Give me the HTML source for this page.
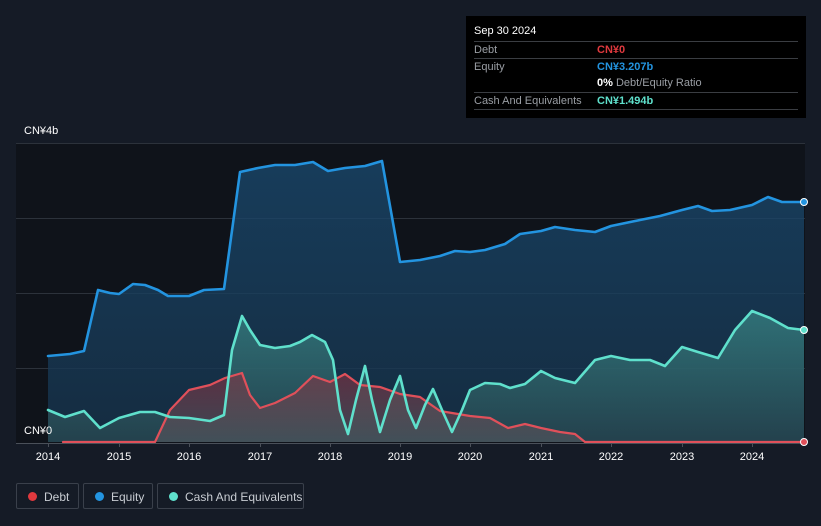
<!DOCTYPE html>
<html><head><meta charset="utf-8"><style>
body{margin:0;width:821px;height:526px;background:#151b26;font-family:"Liberation Sans",sans-serif;overflow:hidden;position:relative}
.tt{position:absolute;left:466px;top:16px;width:340px;height:102px;background:#000;color:#fff;font-size:11px}
.tt .r{position:absolute;left:8px;width:324px;border-top:1px solid #3a3d42;height:17px;line-height:17px}
.tt .l{color:#9a9ea4;position:absolute;left:0}
.tt .v{position:absolute;left:123px;font-weight:bold}
.leg{position:absolute;top:483px;height:26px;border:1px solid #3a404b;border-radius:2px;color:#c8ccd2;font-size:12px;line-height:26px;box-sizing:border-box}
.leg i{position:absolute;left:11px;top:8px;width:9px;height:9px;border-radius:50%}
.leg span{position:absolute;left:27px}
.ax{position:absolute;color:#fff;font-size:11px}
</style></head><body>
<svg width="821" height="526" style="position:absolute;left:0;top:0">
<defs>
<linearGradient id="ge" x1="0" y1="0" x2="0" y2="1"><stop offset="0" stop-color="#1a4a70" stop-opacity=".75"/><stop offset="1" stop-color="#16324a" stop-opacity=".8"/></linearGradient>
<linearGradient id="gc" x1="0" y1="0" x2="0" y2="1"><stop offset="0" stop-color="#3a8a88" stop-opacity=".7"/><stop offset="1" stop-color="#2a4a52" stop-opacity=".7"/></linearGradient>
<linearGradient id="gd" x1="0" y1="0" x2="0" y2="1"><stop offset="0" stop-color="#8a3040" stop-opacity=".6"/><stop offset="1" stop-color="#555a60" stop-opacity=".6"/></linearGradient>
</defs>
<rect x="16" y="143" width="789" height="300" fill="#0f131a"/>
<g stroke="#2c323b" stroke-width="1"><line x1="16" x2="805" y1="143.5" y2="143.5"/><line x1="16" x2="805" y1="218.5" y2="218.5"/><line x1="16" x2="805" y1="293.5" y2="293.5"/><line x1="16" x2="805" y1="368.5" y2="368.5"/></g>
<polygon fill="url(#ge)" points="48,442 48,356 70,354 84,351 98,290 110,293 119,294 133,284 145,285 158,290 168,296 189,296 204,290 224,289 240,172 258,168 275,165 295,165 313,162 328,171 345,168 365,166 382,161 400,262 420,260 440,256 455,251 470,252 485,250 505,244 520,234 541,231 555,227 575,230 595,232 611,226 640,220 660,216 682,210 698,206 712,211 730,210 752,205 768,197 782,202 804,202 804,442"/>
<polygon fill="url(#gc)" points="48,442 48,410 65,417 84,411 100,428 119,418 140,412 155,412 170,417 189,418 210,421 224,415 232,350 242,316 250,330 260,345 275,348 290,346 300,342 312,335 325,342 333,360 340,410 348,434 356,400 365,366 372,400 380,432 390,400 400,376 408,410 416,428 425,405 433,389 442,410 452,432 462,410 470,390 485,383 500,384 510,388 525,384 541,371 555,378 575,383 595,360 611,356 630,360 650,360 665,366 682,347 698,352 718,358 735,330 752,311 770,318 788,328 804,330 804,442"/>
<polygon fill="url(#gd)" points="155,442 170,410 189,390 210,385 225,378 242,373 250,395 260,408 275,403 295,393 313,376 330,382 345,374 360,385 380,387 400,394 420,397 440,411 470,416 490,418 508,428 525,424 541,428 560,432 575,434 585,442"/>
<g fill="none" stroke-width="2.2" stroke-linejoin="round" stroke-linecap="round">
<polyline stroke="#e0505a" points="63,442 155,442 170,410 189,390 210,385 225,378 242,373 250,395 260,408 275,403 295,393 313,376 330,382 345,374 360,385 380,387 400,394 420,397 440,411 470,416 490,418 508,428 525,424 541,428 560,432 575,434 585,442 804,442"/>
<polyline stroke="#2394e0" stroke-width="2.6" points="48,356 70,354 84,351 98,290 110,293 119,294 133,284 145,285 158,290 168,296 189,296 204,290 224,289 240,172 258,168 275,165 295,165 313,162 328,171 345,168 365,166 382,161 400,262 420,260 440,256 455,251 470,252 485,250 505,244 520,234 541,231 555,227 575,230 595,232 611,226 640,220 660,216 682,210 698,206 712,211 730,210 752,205 768,197 782,202 804,202"/>
<polyline stroke="#5fe0cc" stroke-width="2.6" points="48,410 65,417 84,411 100,428 119,418 140,412 155,412 170,417 189,418 210,421 224,415 232,350 242,316 250,330 260,345 275,348 290,346 300,342 312,335 325,342 333,360 340,410 348,434 356,400 365,366 372,400 380,432 390,400 400,376 408,410 416,428 425,405 433,389 442,410 452,432 462,410 470,390 485,383 500,384 510,388 525,384 541,371 555,378 575,383 595,360 611,356 630,360 650,360 665,366 682,347 698,352 718,358 735,330 752,311 770,318 788,328 804,330"/>
</g>
<line x1="16" x2="805" y1="443.5" y2="443.5" stroke="#4a5059"/>
<g stroke="#4a5059"><line x1="48.5" x2="48.5" y1="443" y2="447"/><line x1="119.5" x2="119.5" y1="443" y2="447"/><line x1="189.5" x2="189.5" y1="443" y2="447"/><line x1="260.5" x2="260.5" y1="443" y2="447"/><line x1="330.5" x2="330.5" y1="443" y2="447"/><line x1="400.5" x2="400.5" y1="443" y2="447"/><line x1="470.5" x2="470.5" y1="443" y2="447"/><line x1="541.5" x2="541.5" y1="443" y2="447"/><line x1="611.5" x2="611.5" y1="443" y2="447"/><line x1="682.5" x2="682.5" y1="443" y2="447"/><line x1="752.5" x2="752.5" y1="443" y2="447"/></g>
<circle cx="804" cy="202" r="3.5" fill="#2394e0" stroke="#fff" stroke-width="1"/>
<circle cx="804" cy="330" r="3.5" fill="#5fe0cc" stroke="#fff" stroke-width="1"/>
<circle cx="804" cy="442" r="3.5" fill="#e0505a" stroke="#fff" stroke-width="1"/>
<g fill="#fff" font-size="11" font-family="Liberation Sans" text-anchor="middle">
<text x="48" y="460">2014</text><text x="119" y="460">2015</text><text x="189" y="460">2016</text><text x="260" y="460">2017</text><text x="330" y="460">2018</text><text x="400" y="460">2019</text><text x="470" y="460">2020</text><text x="541" y="460">2021</text><text x="611" y="460">2022</text><text x="682" y="460">2023</text><text x="752" y="460">2024</text>
</g>
</svg>
<div class="ax" style="left:24px;top:125px">CN¥4b</div>
<div class="ax" style="left:24px;top:425px">CN¥0</div>
<div class="tt">
<div style="position:absolute;left:8px;top:9px;font-size:11px">Sep 30 2024</div>
<div class="r" style="top:25px"><span class="l">Debt</span><span class="v" style="color:#e0393e">CN¥0</span></div>
<div class="r" style="top:42px;border-top-color:#3a3d42"><span class="l">Equity</span><span class="v" style="color:#2394e0">CN¥3.207b</span></div>
<div class="r" style="top:59px;border-top:none"><span class="v" style="color:#fff">0% <span style="color:#9a9ea4;font-weight:normal">Debt/Equity Ratio</span></span></div>
<div class="r" style="top:76px"><span class="l">Cash And Equivalents</span><span class="v" style="color:#5fe0cc">CN¥1.494b</span></div>
<div class="r" style="top:93px;height:0"></div>
</div>
<div class="leg" style="left:16px;width:63px"><i style="background:#e0393e"></i><span>Debt</span></div>
<div class="leg" style="left:83px;width:70px"><i style="background:#2394e0"></i><span>Equity</span></div>
<div class="leg" style="left:157px;width:147px"><i style="background:#5fe0cc"></i><span>Cash And Equivalents</span></div>
</body></html>
